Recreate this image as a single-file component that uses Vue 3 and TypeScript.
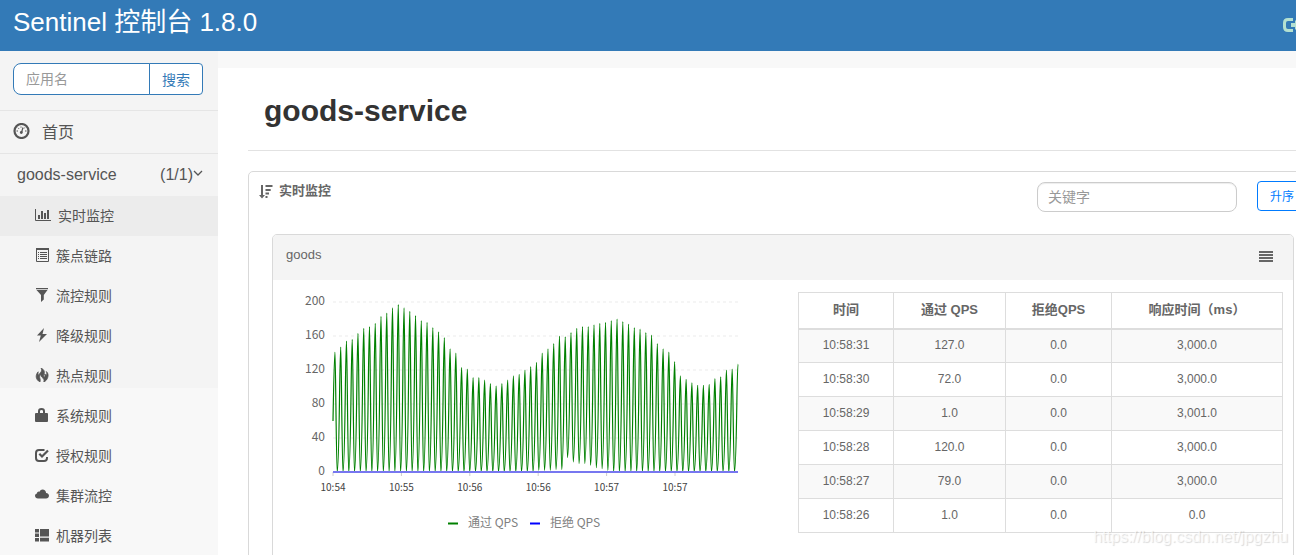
<script setup lang="ts">
import { ref } from 'vue'

interface MenuItem { icon: string; label: string }
interface Metric { time: string; pass: string; block: string; rt: string }

const appName = ref('')
const keyword = ref('')
const active = ref('实时监控')

const menu: MenuItem[] = [
  { icon: 'bars', label: '实时监控' },
  { icon: 'list', label: '簇点链路' },
  { icon: 'filter', label: '流控规则' },
  { icon: 'flash', label: '降级规则' },
  { icon: 'fire', label: '热点规则' },
  { icon: 'lock', label: '系统规则' },
  { icon: 'check', label: '授权规则' },
  { icon: 'cloud', label: '集群流控' },
  { icon: 'machines', label: '机器列表' },
]

const metrics: Metric[] = [
  { time: '10:58:31', pass: '127.0', block: '0.0', rt: '3,000.0' },
  { time: '10:58:30', pass: '72.0', block: '0.0', rt: '3,000.0' },
  { time: '10:58:29', pass: '1.0', block: '0.0', rt: '3,001.0' },
  { time: '10:58:28', pass: '120.0', block: '0.0', rt: '3,000.0' },
  { time: '10:58:27', pass: '79.0', block: '0.0', rt: '3,000.0' },
  { time: '10:58:26', pass: '1.0', block: '0.0', rt: '0.0' },
]

const left = 60
const right = 465
const base = 192
const yTicks = [200, 160, 120, 80, 40, 0]
const xTicks = ['10:54', '10:55', '10:56', '10:56', '10:57', '10:57']
const y = (v: number) => base - v * 0.85

// Peaks of the passed QPS, one per sampling burst
const peaks = [
  141, 147, 154, 156, 163, 169, 171, 175, 183, 187, 193, 197, 193, 189, 184, 178, 176, 170,
  165, 158, 145, 140, 123, 121, 111, 111, 108, 104, 101, 104, 108, 113, 115, 120, 124, 129,
  140, 145, 151, 160, 159, 164, 169, 171, 171, 173, 175, 176, 178, 180, 177, 174, 170, 168,
  164, 161, 151, 145, 141, 130, 113, 109, 105, 102, 102, 103, 110, 112, 120, 121, 127,
]
// Lows that stay above zero, from the burst with index 35 on
const lows = [2, 2, 2, 3, 3, 17, 12, 10, 10, 8, 5, 4, 2]
const first = 62
const step = (right - first) / (peaks.length - 1)

function passPath(): string {
  let d = `M${left} ${y(60)}C${left + 0.5} ${y(90)} ${first - 0.8} ${y(peaks[0])} ${first} ${y(peaks[0])}`
  for (let i = 0; i < peaks.length - 1; i++) {
    const x = first + i * step
    const top = y(peaks[i])
    const low = y(lows[i - 35] ?? 0)
    const next = y(peaks[i + 1])
    const mid = x + 2.2
    d += `C${x + 0.6} ${top} ${mid - 0.9} ${low} ${mid} ${low}`
    d += `C${mid + 2.2} ${low} ${x + step - 1.2} ${next} ${x + step} ${next}`
  }
  return d
}
const pass = passPath()
</script>

<template>
  <div class="shell">
    <header class="topbar">
      <a class="brand" href="#">Sentinel 控制台 1.8.0</a>
      <a class="logout" href="#" aria-label="退出">
        <svg width="18" height="14" viewBox="0 0 18 14"><path d="M10 1.500H5Q1.500 1.500 1.500 5v4q0 3.500 3.500 3.500h5" fill="none" stroke="currentColor" stroke-width="3" /><path d="M8 5h4V2l5 5-5 5V9H8z" fill="currentColor" /></svg>
      </a>
    </header>

    <div class="body">
      <nav class="sidebar">
        <form class="search" @submit.prevent>
          <input v-model="appName" type="text" placeholder="应用名" aria-label="应用名">
          <button type="submit">搜索</button>
        </form>
        <a class="home" href="#">
          <svg width="17" height="16" viewBox="0 0 17 16"><circle cx="8.500" cy="8" r="7" fill="none" stroke="currentColor" stroke-width="2.200" /><path d="M8.500 9.500 10 4.500" stroke="currentColor" stroke-width="1.200" /><circle cx="8.300" cy="9.500" r="1.400" fill="currentColor" /><path d="M3.500 8h1.500M12 8h1.500M5 4.800l1 1M8 3.500v1.200M11.800 4.500l-.8 1" stroke="currentColor" /></svg>
          <span>首页</span>
        </a>
        <a class="service" href="#">
          <span>goods-service</span>
          <span class="count">(1/1)<svg width="10" height="10" viewBox="0 0 10 10"><path d="M1 1l4 4 4-4" fill="none" stroke="currentColor" stroke-width="1.300" /></svg></span>
        </a>
        <ul>
          <li v-for="m in menu" :key="m.label">
            <a href="#" :class="{ active: m.label === active }" @click.prevent="active = m.label">
              <svg v-if="m.icon === 'bars'" width="16" height="14" viewBox="0 0 16 14"><path d="M.5 1v11.500H16" fill="none" stroke="currentColor" /><path d="M3 7h2v4H3zM6 3h2v8H6zM9 5h2v6H9zM12 2h2v9h-2z" fill="currentColor" /></svg>
              <svg v-else-if="m.icon === 'list'" width="14" height="14" viewBox="0 0 14 14"><path d="M1.500.5h12v13h-12z" fill="none" stroke="currentColor" /><path d="M1 0h13v2H1zM3 4h1v1H3zM5 4h7v1H5zM3 6h1v1H3zM5 6h7v1H5zM3 8h1v1H3zM5 8h7v1H5zM3 10h1v1H3zM5 10h7v1H5z" fill="currentColor" /></svg>
              <svg v-else-if="m.icon === 'filter'" width="14" height="14" viewBox="0 0 14 14"><path d="M1 0h12v1.300H1zM1.500 2h11L8.800 7v4.500L6 14V7z" fill="currentColor" /></svg>
              <svg v-else-if="m.icon === 'flash'" width="14" height="14" viewBox="0 0 14 14"><path d="M9 0 2 7.500h3.800L4 14l8-8H7.500z" fill="currentColor" /></svg>
              <svg v-else-if="m.icon === 'fire'" width="14" height="14" viewBox="0 0 14 14"><path d="M6 0c3 1.500 4 3.500 3 6-.5 1.500-.5 2.500.3 3.200.9-.8.9-2 .2-3.200 1 .2 1.500 1 1.500 1.800C12 6.500 12 5 11.300 3.500 13 5 13.500 7 12.800 9.200 12.200 11.500 10.800 13 8.800 14c.6-1.600.2-2.900-1-4C6.300 8.800 5.500 7.500 5.900 6 4.500 7.300 4.300 8.800 4.900 10.200c.4 1.200.4 2.400.1 3.800C2.800 12.800 1.200 11 1.200 8.800 1.100 6.800 2 5.200 3.200 3.800 2.800 5.500 3 6.500 3.700 7.200 4.200 6 5 5.200 5.800 4.200 6.800 3 7 1.500 6 0z" fill="currentColor" stroke="currentColor" stroke-width=".8" /></svg>
              <svg v-else-if="m.icon === 'lock'" width="14" height="14" viewBox="0 0 14 14"><path d="M4 6V3.200Q4 1 6.500 1T9 3.200V6" fill="none" stroke="currentColor" stroke-width="2" /><path d="M1 5h11q1 0 1 1v7q0 1-1 1H1q-1 0-1-1V6q0-1 1-1z" fill="currentColor" /></svg>
              <svg v-else-if="m.icon === 'check'" width="14" height="14" viewBox="0 0 14 14"><path d="M9.500 2H4Q1 2 1 5v5q0 3 3 3h5q3 0 3-3V9" fill="none" stroke="currentColor" stroke-width="2" /><path d="M4.300 5.800 7 8.500l6-6" fill="none" stroke="currentColor" stroke-width="2.200" /></svg>
              <svg v-else-if="m.icon === 'cloud'" width="14" height="14" viewBox="0 0 14 14"><path d="M3 10.500C1.300 10.500 0 9.300 0 7.800 0 6.500.8 5.700 2 5.400 2 4 3.400 3.200 4.600 3.700 5.200 2.300 6.200 1.500 7.600 1.500c2 0 3.300 1.500 3.500 3.400C13 5 14 6.200 14 7.700c0 1.600-1.300 2.800-3 2.800z" fill="currentColor" /></svg>
              <svg v-else width="14" height="14" viewBox="0 0 14 14"><path d="M0 1h4v3.500H0zM5 1h9v7.500H5zM0 5.500h4V9H0zM0 10h4v3.500H0zM5 9.800h9v3.700H5z" fill="currentColor" /></svg>
              <span>{{ m.label }}</span>
            </a>
          </li>
        </ul>
      </nav>

      <main>
        <h1>goods-service</h1>
        <section class="card">
          <div class="card-head">
            <svg width="14" height="14" viewBox="0 0 14 14"><path d="M3 0v11" stroke="currentColor" stroke-width="2" /><path d="M0 10h6l-3 3.500zM6.500 0h7v2h-7zM6.500 4h5.200v2H6.500zM6.500 7.500H10v2H6.500zM6.500 11h2v2h-2z" fill="currentColor" /></svg>
            <strong>实时监控</strong>
            <input v-model="keyword" type="text" placeholder="关键字" aria-label="关键字">
            <button type="button">升序</button>
          </div>

          <article class="resource">
            <div class="resource-head">
              <span>goods</span>
              <button type="button" aria-label="列表">
                <svg width="14" height="11" viewBox="0 0 14 11"><path d="M0 0h14v2H0zM0 3h14v2H0zM0 6h14v2H0zM0 9h14v2H0z" fill="currentColor" /></svg>
              </button>
            </div>
            <div class="resource-body">
              <svg class="chart" viewBox="0 0 525 275" role="img" aria-label="QPS">
                <g v-for="v in yTicks" :key="v">
                  <line v-if="v" class="grid" :x1="left" :x2="right" :y1="y(v)" :y2="y(v)" />
                  <text class="y-label" x="52" :y="y(v) + 3">{{ v }}</text>
                </g>
                <g v-for="(t, i) in xTicks" :key="i">
                  <line class="tick" :x1="left + i * 68.4" :x2="left + i * 68.4" :y1="base" :y2="base + 4" />
                  <text class="x-label" :x="left + i * 68.4" y="211">{{ t }}</text>
                </g>
                <path class="pass" :d="pass" />
                <line class="block axis" :x1="left" :x2="right" :y1="base" :y2="base" />
                <line class="pass key" x1="175" x2="185" y1="243.500" y2="243.500" />
                <text class="legend" x="195" y="247">通过 QPS</text>
                <line class="block key" x1="257" x2="267" y1="243.500" y2="243.500" />
                <text class="legend" x="277" y="247">拒绝 QPS</text>
              </svg>
              <table>
                <colgroup><col class="c-time"><col class="c-pass"><col class="c-block"><col></colgroup>
                <thead>
                  <tr><th>时间</th><th>通过 QPS</th><th>拒绝QPS</th><th>响应时间（ms）</th></tr>
                </thead>
                <tbody>
                  <tr v-for="r in metrics" :key="r.time">
                    <td>{{ r.time }}</td><td>{{ r.pass }}</td><td>{{ r.block }}</td><td>{{ r.rt }}</td>
                  </tr>
                </tbody>
              </table>
            </div>
          </article>
        </section>
      </main>
    </div>
    <div class="watermark">https://blog.csdn.net/jpgzhu</div>
  </div>
</template>

<style>
body { margin: 0; }
</style>

<style scoped>
* { box-sizing: border-box; }
.shell {
  position: relative;
  display: flex;
  flex-direction: column;
  height: 100vh;
  overflow: hidden;
  background: #f8f8f8;
  color: #555;
  font-family: "Liberation Sans", "Noto Sans CJK SC", sans-serif;
  font-size: 14px;
}
a { color: inherit; text-decoration: none; }
svg { display: block; flex: none; }
button, input { font-family: inherit; }
.topbar {
  display: flex;
  flex: none;
  justify-content: space-between;
  height: 51px;
  padding-left: 13px;
  background: #337ab7;
}
.brand { color: #fff; font-size: 26px; line-height: 44px; }
.logout { margin: 18px -5px 0 0; color: #b4e0d0; }
.body { display: flex; flex: 1; min-height: 0; }
.sidebar {
  flex: none;
  width: 218px;
  background: linear-gradient(#f4f4f4 337px, #f8f8f8 337px);
}
.search { display: flex; padding: 12px 15px 15px 13px; border-bottom: 1px solid #e5e5e5; }
.search input {
  flex: 1;
  min-width: 0;
  height: 32px;
  padding: 0 12px;
  border: 1px solid #337ab7;
  border-radius: 8px 0 0 8px;
  background: #fff;
  font-size: 14px;
}
.search button {
  width: 54px;
  margin-left: -1px;
  padding: 0;
  border: 1px solid #337ab7;
  border-radius: 0 4px 4px 0;
  background: #fff;
  color: #337ab7;
  font-size: 14px;
}
input::placeholder { color: #999; opacity: 1; }
.home {
  display: flex;
  align-items: center;
  gap: 12px;
  height: 43px;
  padding: 0 0 3px 13px;
  border-bottom: 1px solid #e5e5e5;
  font-size: 16px;
}
.service {
  display: flex;
  align-items: center;
  justify-content: space-between;
  height: 42px;
  padding: 0 15px 0 17px;
  font-size: 16px;
}
.count { display: flex; align-items: center; }
ul { margin: 0; padding: 0; list-style: none; }
li a { display: flex; align-items: center; gap: 7px; height: 40px; padding: 0 0 2px 35px; }
li a.active { background: #ececec; }
main { flex: 1; min-width: 0; margin-top: 17px; padding-left: 30px; background: #fff; }
h1 {
  margin: 0 0 20px;
  padding: 24px 16px 20px;
  border-bottom: 1px solid #e2e2e2;
  color: #333;
  font-size: 30px;
  line-height: 38px;
}
.card {
  margin-right: -26px;
  padding: 0 27px 0 23px;
  border: 1px solid #d9d9d9;
  border-radius: 5px 5px 0 0;
  color: #666;
}
.card-head { display: flex; align-items: flex-start; height: 62px; margin: 0 -27px 0 -13px; }
.card-head svg { margin-top: 13px; }
.card-head strong { margin-left: 6px; font-size: 13px; line-height: 38px; }
.card-head input {
  width: 200px;
  height: 30px;
  margin: 10px 20px 0 auto;
  padding: 0 10px;
  border: 1px solid #ccc;
  border-radius: 8px;
  box-shadow: inset 0 1px 1px rgba(0, 0, 0, 0.075);
  font-size: 14px;
}
.card-head button {
  width: 50px;
  height: 30px;
  margin: 9px 14px 0 0;
  padding: 0 0 2px 12px;
  border: 1px solid #007bff;
  border-radius: 4px;
  background: #fff;
  color: #007bff;
  font-size: 12px;
  text-align: left;
}
.resource { padding-bottom: 20px; border: 1px solid #d9d9d9; border-radius: 5px 5px 0 0; }
.resource-head {
  display: flex;
  align-items: center;
  justify-content: space-between;
  height: 45px;
  padding: 0 20px 6px 13px;
  border-radius: 4px 4px 0 0;
  background: #f4f4f4;
  font-size: 13px;
}
.resource-head button { margin-top: 4px; padding: 0; border: 0; background: none; color: #666; }
.resource-body {
  display: grid;
  grid-template-columns: minmax(0, 525fr) minmax(0, 485fr);
  align-items: start;
  padding-right: 10px;
}
.chart { width: 100%; font-family: "Noto Sans CJK SC", sans-serif; }
.grid { stroke: #ebebeb; stroke-dasharray: 3 3; }
.tick { stroke: #ccc; }
.y-label { fill: #666; font-size: 12px; text-anchor: end; }
.x-label { fill: #444; font-size: 10px; text-anchor: middle; }
.legend { fill: #808080; font-size: 12px; }
.pass { fill: none; stroke: #008000; stroke-width: 1.2; }
.block { stroke: #0000ff; stroke-width: 1; }
.axis { stroke: #7777f0; stroke-width: 2; }
.key { stroke-width: 2; }
table {
  width: 100%;
  margin-top: 12px;
  border-collapse: collapse;
  table-layout: fixed;
  text-align: center;
}
.c-time { width: 95px; }
.c-pass { width: 112px; }
.c-block { width: 106px; }
th, td { padding: 0 0 2px; border: 1px solid #ddd; }
th { height: 36px; padding-bottom: 4px; border-bottom-width: 2px; font-size: 13px; }
td { height: 34px; font-size: 12px; }
tbody tr:nth-child(odd) { background: #f9f9f9; }
.watermark {
  position: absolute;
  right: 8px;
  bottom: 9px;
  color: rgba(255, 255, 255, 0.7);
  font-size: 16px;
  line-height: 18px;
  text-shadow: 1px 1px 1px rgba(0, 0, 0, 0.15);
}
</style>
